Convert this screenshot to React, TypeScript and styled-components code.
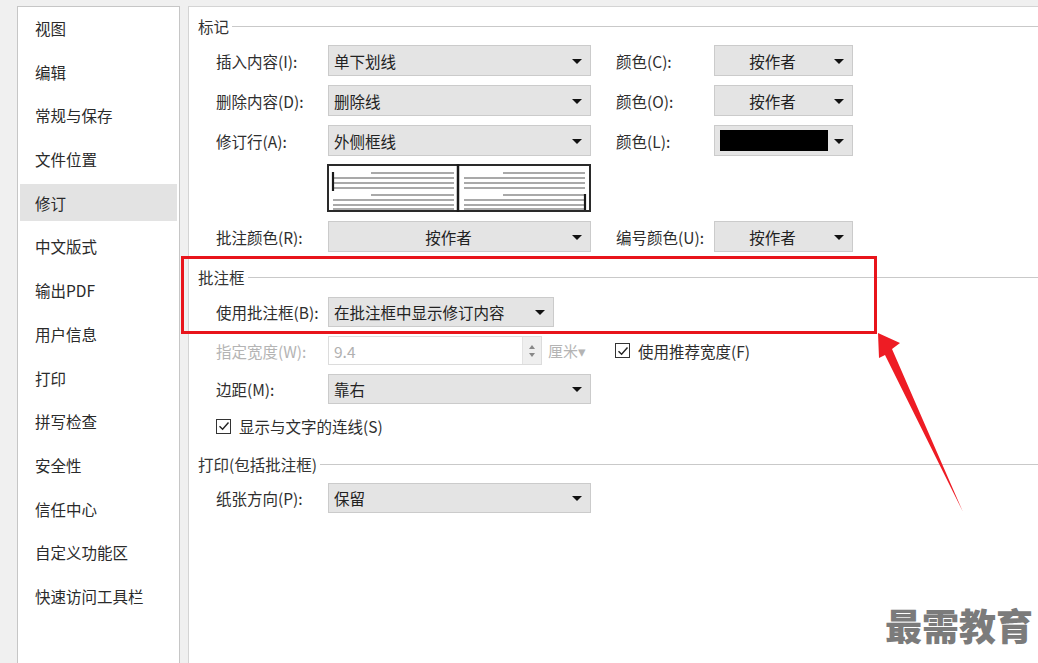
import React from "react";
import styled, { createGlobalStyle } from "styled-components";

const Global = createGlobalStyle`
  html, body { margin: 0; padding: 0; background: #f0f0f0; }
  body { font-family: "Noto Sans CJK SC", "Noto Sans", sans-serif; }
  * { box-sizing: border-box; }
`;

const Page = styled.div`
  position: relative;
  width: 1038px;
  height: 663px;
  overflow: hidden;
  display: flex;
  padding: 6px 0 0 17px;
  gap: 8px;
  background: #f0f0f0;
  color: #2e2e2e;
  font-size: 15px;
`;

const Sidebar = styled.div`
  width: 163px;
  height: 700px;
  background: #fff;
  border: 1px solid #c6c6c6;
  padding: 2.5px 2px 0 2px;
  display: flex;
  flex-direction: column;
  gap: 6.7px;
`;

const NavItem = styled.div<{ $active?: boolean }>`
  height: 37px;
  display: flex;
  align-items: center;
  padding-left: 15px;
  font-size: 15.5px;
  color: #2a2a2a;
  background: ${(p) => (p.$active ? "#e3e3e3" : "transparent")};
`;

const Panel = styled.div`
  flex: 1;
  height: 700px;
  background: #fff;
  border-left: 1px solid #d4d4d4;
  border-top: 1px solid #d4d4d4;
  padding: 9px 0 0 9px;
  display: flex;
  flex-direction: column;
`;

const SectionHead = styled.div<{ $mt: number }>`
  display: flex;
  align-items: center;
  height: 20px;
  margin-top: ${(p) => p.$mt}px;
  font-size: 15.5px;
  color: #333;
`;

const HeadLine = styled.div`
  flex: 1;
  height: 1px;
  background: #c9c9c9;
  margin-left: 3px;
`;

const Row = styled.div<{ $mt: number; $h?: number }>`
  display: flex;
  align-items: center;
  height: ${(p) => p.$h ?? 31}px;
  margin-top: ${(p) => p.$mt}px;
  padding-left: 18px;
`;

const Label = styled.div<{ $disabled?: boolean }>`
  width: 112px;
  flex: none;
  font-size: 15.5px;
  color: ${(p) => (p.$disabled ? "#b4b4b4" : "#2e2e2e")};
  white-space: nowrap;
`;

const RightLabel = styled(Label)`
  width: 98px;
  margin-left: 25px;
`;

const Select = styled.div<{ $w: number; $center?: boolean }>`
  position: relative;
  width: ${(p) => p.$w}px;
  height: 100%;
  flex: none;
  background: #e4e4e4;
  border: 1px solid #cbcbcb;
  display: flex;
  align-items: center;
  justify-content: ${(p) => (p.$center ? "center" : "flex-start")};
  padding: ${(p) => (p.$center ? "0 22px 0 0" : "0 24px 0 5px")};
  font-size: 15.5px;
  color: #222;
`;

const Arrow = styled.span`
  position: absolute;
  right: 8px;
  top: 50%;
  margin-top: -2px;
  width: 0;
  height: 0;
  border-left: 5px solid transparent;
  border-right: 5px solid transparent;
  border-top: 5px solid #111;
`;

const Swatch = styled.div`
  width: 108px;
  height: 21px;
  background: #000;
`;

const Preview = styled.div`
  margin: 8px 0 0 129px;
  width: 264px;
  height: 48px;
  display: flex;
`;

const NumInput = styled.div`
  position: relative;
  width: 214px;
  height: 100%;
  flex: none;
  border: 1px solid #dcdcdc;
  background: #fff;
  display: flex;
  align-items: center;
  padding-left: 5px;
  color: #b0b0b0;
  font-size: 15.5px;
`;

const Spinner = styled.div`
  position: absolute;
  right: 0;
  top: 0;
  bottom: 0;
  width: 19px;
  background: #efefef;
  border-left: 1px solid #e2e2e2;
  display: flex;
  flex-direction: column;
  align-items: center;
  justify-content: center;
  gap: 4px;
`;

const SpinUp = styled.span`
  width: 0;
  height: 0;
  border-left: 3px solid transparent;
  border-right: 3px solid transparent;
  border-bottom: 4px solid #888;
`;

const SpinDown = styled(SpinUp)`
  border-bottom: none;
  border-top: 4px solid #888;
`;

const Unit = styled.div`
  width: 49px;
  flex: none;
  padding-left: 6px;
  color: #b4b4b4;
  font-size: 15px;
  white-space: nowrap;
`;

const CheckRow = styled.label<{ $ml?: number }>`
  display: flex;
  align-items: center;
  gap: 8px;
  margin-left: ${(p) => p.$ml ?? 0}px;
  font-size: 15.5px;
  color: #2e2e2e;
  white-space: nowrap;
`;

const Box = styled.span`
  width: 15px;
  height: 15px;
  border: 1px solid #333;
  background: #fff;
  display: flex;
  align-items: center;
  justify-content: center;
`;

const Highlight = styled.div`
  position: absolute;
  left: 181px;
  top: 256px;
  width: 696px;
  height: 78px;
  border: 3px solid #e8141b;
  pointer-events: none;
`;

const ArrowSvg = styled.svg`
  position: absolute;
  left: 0;
  top: 0;
  pointer-events: none;
`;

const Watermark = styled.div`
  position: absolute;
  left: 885px;
  top: 598px;
  font-size: 37px;
  font-weight: 900;
  color: #7b7b7b;
  white-space: nowrap;
`;

const Check = () => (
  <Box>
    <svg width="12" height="12" viewBox="0 0 12 12">
      <path d="M1.5 6.2 L4.6 9.3 L10.5 2.5" fill="none" stroke="#222" strokeWidth="1.4" />
    </svg>
  </Box>
);

const nav = [
  "视图",
  "编辑",
  "常规与保存",
  "文件位置",
  "修订",
  "中文版式",
  "输出PDF",
  "用户信息",
  "打印",
  "拼写检查",
  "安全性",
  "信任中心",
  "自定义功能区",
  "快速访问工具栏",
];

const PreviewArt = () => {
  const ys = [9, 14, 19, 24, 31, 36, 41, 45];
  const shortL = [0, 4];
  return (
    <svg width="264" height="48" viewBox="0 0 264 48">
      <rect x="1" y="1" width="262" height="46" fill="#fff" stroke="#2a2a2a" strokeWidth="2" />
      <line x1="131" y1="0" x2="131" y2="48" stroke="#1a1a1a" strokeWidth="2.5" />
      {ys.map((y, i) => (
        <line
          key={"l" + i}
          x1={shortL.includes(i) ? 44 : 6}
          y1={y}
          x2={127}
          y2={y}
          stroke="#8c8c8c"
          strokeWidth="1.6"
        />
      ))}
      {ys.map((y, i) => (
        <line
          key={"r" + i}
          x1={shortL.includes(i) ? 176 : 137}
          y1={y}
          x2={258}
          y2={y}
          stroke="#8c8c8c"
          strokeWidth="1.6"
        />
      ))}
      <line x1="6" y1="8" x2="6" y2="27" stroke="#1a1a1a" strokeWidth="2.2" />
      <line x1="258" y1="30" x2="258" y2="46" stroke="#1a1a1a" strokeWidth="2.2" />
    </svg>
  );
};

export default function App() {
  return (
    <>
      <Global />
      <Page>
        <Sidebar>
          {nav.map((n) => (
            <NavItem key={n} $active={n === "修订"}>
              {n}
            </NavItem>
          ))}
        </Sidebar>
        <Panel>
          <SectionHead $mt={0}>
            标记
            <HeadLine />
          </SectionHead>
          <Row $mt={9}>
            <Label>插入内容(I):</Label>
            <Select $w={263}>
              单下划线
              <Arrow />
            </Select>
            <RightLabel>颜色(C):</RightLabel>
            <Select $w={139} $center>
              按作者
              <Arrow />
            </Select>
          </Row>
          <Row $mt={9}>
            <Label>删除内容(D):</Label>
            <Select $w={263}>
              删除线
              <Arrow />
            </Select>
            <RightLabel>颜色(O):</RightLabel>
            <Select $w={139} $center>
              按作者
              <Arrow />
            </Select>
          </Row>
          <Row $mt={9}>
            <Label>修订行(A):</Label>
            <Select $w={263}>
              外侧框线
              <Arrow />
            </Select>
            <RightLabel>颜色(L):</RightLabel>
            <Select $w={139}>
              <Swatch />
              <Arrow />
            </Select>
          </Row>
          <Preview>
            <PreviewArt />
          </Preview>
          <Row $mt={9}>
            <Label>批注颜色(R):</Label>
            <Select $w={263} $center>
              按作者
              <Arrow />
            </Select>
            <RightLabel>编号颜色(U):</RightLabel>
            <Select $w={139} $center>
              按作者
              <Arrow />
            </Select>
          </Row>

          <SectionHead $mt={15}>
            批注框
            <HeadLine />
          </SectionHead>
          <Row $mt={10} $h={30}>
            <Label>使用批注框(B):</Label>
            <Select $w={226}>
              在批注框中显示修订内容
              <Arrow />
            </Select>
          </Row>
          <Row $mt={9} $h={29}>
            <Label $disabled>指定宽度(W):</Label>
            <NumInput>
              9.4
              <Spinner>
                <SpinUp />
                <SpinDown />
              </Spinner>
            </NumInput>
            <Unit>厘米▾</Unit>
            <CheckRow $ml={24}>
              <Check />
              使用推荐宽度(F)
            </CheckRow>
          </Row>
          <Row $mt={9} $h={30}>
            <Label>边距(M):</Label>
            <Select $w={263}>
              靠右
              <Arrow />
            </Select>
          </Row>
          <Row $mt={12} $h={20}>
            <CheckRow>
              <Check />
              显示与文字的连线(S)
            </CheckRow>
          </Row>

          <SectionHead $mt={18}>
            打印(包括批注框)
            <HeadLine />
          </SectionHead>
          <Row $mt={9} $h={30}>
            <Label>纸张方向(P):</Label>
            <Select $w={263}>
              保留
              <Arrow />
            </Select>
          </Row>
        </Panel>

        <Highlight />
        <ArrowSvg width="1038" height="663" viewBox="0 0 1038 663">
          <polygon
            points="878,333 900,343 892,349 963,512 885,355 879,358"
            fill="#ee1c24"
          />
        </ArrowSvg>
        <Watermark>最需教育</Watermark>
      </Page>
    </>
  );
}
